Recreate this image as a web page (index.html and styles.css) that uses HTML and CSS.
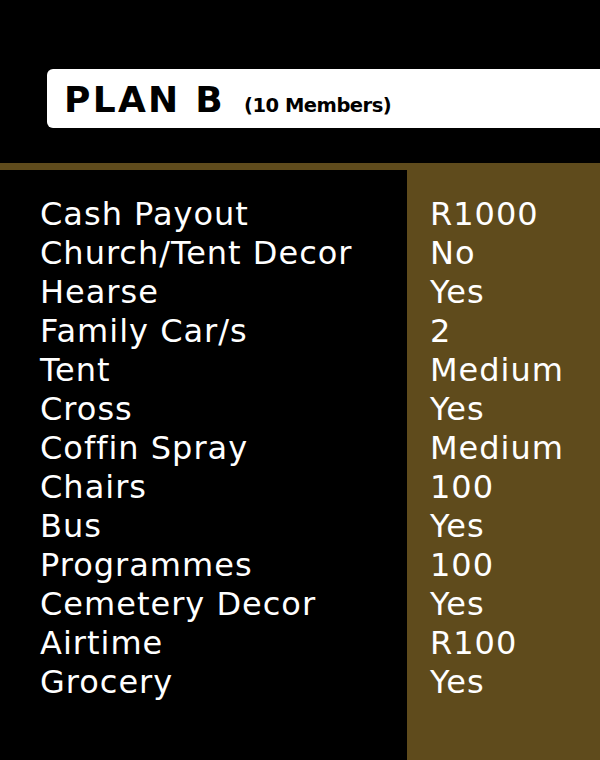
FILE: index.html
```html
<!DOCTYPE html>
<html lang="en">
<head>
<meta charset="utf-8">
<title>Plan B</title>
<link rel="stylesheet" href="styles.css">
</head>
<body>
<div class="page">
  <header class="top">
    <div class="title-bar">
      <span class="plan">PLAN B</span>
      <span class="members">(10 Members)</span>
    </div>
  </header>
  <div class="rule"></div>
  <main class="table">
    <ul class="labels">
      <li>Cash Payout</li>
      <li>Church/Tent Decor</li>
      <li>Hearse</li>
      <li>Family Car/s</li>
      <li>Tent</li>
      <li>Cross</li>
      <li>Coffin Spray</li>
      <li>Chairs</li>
      <li>Bus</li>
      <li>Programmes</li>
      <li>Cemetery Decor</li>
      <li>Airtime</li>
      <li>Grocery</li>
    </ul>
    <ul class="values">
      <li>R1000</li>
      <li>No</li>
      <li>Yes</li>
      <li>2</li>
      <li>Medium</li>
      <li>Yes</li>
      <li>Medium</li>
      <li>100</li>
      <li>Yes</li>
      <li>100</li>
      <li>Yes</li>
      <li>R100</li>
      <li>Yes</li>
    </ul>
  </main>
</div>
</body>
</html>
```
FILE: styles.css
```css
* { box-sizing: border-box; }
html, body {
  margin: 0;
  padding: 0;
  background: #000;
  height: 100%;
}
.page {
  width: 600px;
  height: 760px;
  display: flex;
  flex-direction: column;
  background: #000;
  overflow: hidden;
  font-family: "DejaVu Sans", "Liberation Sans", sans-serif;
}
.top {
  padding: 69px 0 35px 47px;
}
.title-bar {
  height: 59px;
  background: #fff;
  border-radius: 6px 0 0 6px;
  display: flex;
  align-items: baseline;
  gap: 19px;
  padding: 13px 0 0 17px;
  color: #000;
}
.plan {
  font-weight: 700;
  font-size: 36px;
  line-height: 36px;
  letter-spacing: 2.3px;
}
.members {
  font-weight: 700;
  font-size: 19.5px;
  line-height: 20px;
  letter-spacing: -0.5px;
}
.rule {
  height: 7px;
  background: #5f4b1c;
}
.table {
  flex: 1;
  display: flex;
}
.labels, .values {
  list-style: none;
  margin: 0;
  padding-top: 25px;
  color: #fff;
  font-size: 32px;
  line-height: 39px;
  letter-spacing: 1px;
}
.labels {
  width: 407px;
  padding-left: 40px;
  background: #000;
}
.values {
  flex: 1;
  padding-left: 23px;
  background: #5f4b1c;
}
```
